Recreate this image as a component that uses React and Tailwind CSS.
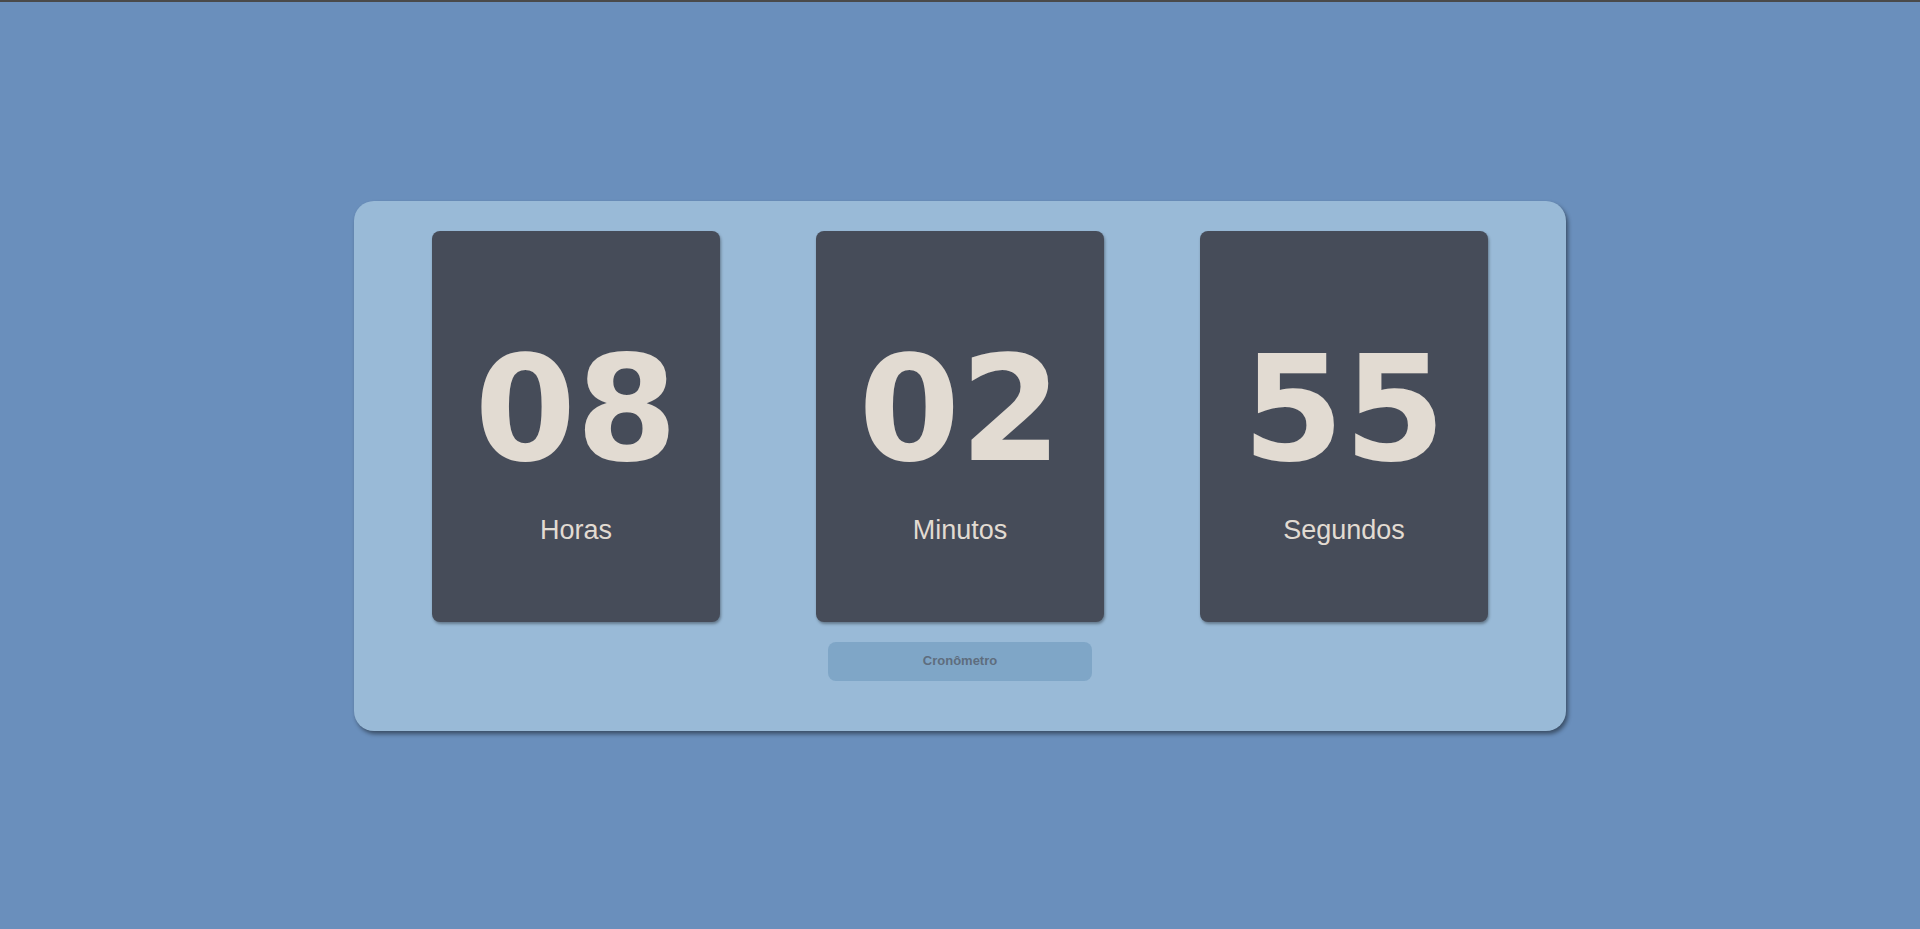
import React from 'react';

const units = [
    { value: '08', label: 'Horas' },
    { value: '02', label: 'Minutos' },
    { value: '55', label: 'Segundos' },
];

const TimeCard = ({ value, label }) => (
    <div className="w-[288px] h-[391px] bg-[#464c59] rounded-[8px] shadow-[1px_2px_3px_rgba(0,0,0,0.35)] flex flex-col items-center pt-[104px]">
        <span className="block text-[146px] leading-[148px] font-bold text-[#e2dbd2] font-['DejaVu_Sans',sans-serif]">
            {value}
        </span>
        <span className="block mt-[31px] text-[27px] leading-[32px] text-[#e2dbd2] font-['Liberation_Sans',sans-serif]">
            {label}
        </span>
    </div>
);

const App = () => {
    return (
        <div className="min-h-screen bg-[#6a8fbc] border-t-2 border-[#4a4a4a] flex items-center justify-center font-['Liberation_Sans',sans-serif]">
            <div className="w-[1212px] h-[530px] bg-[#99bad7] rounded-[20px] shadow-[2px_3px_4px_rgba(0,0,0,0.45)] pt-[30px] flex flex-col items-center">
                <div className="flex gap-[96px]">
                    {units.map(u => <TimeCard key={u.label} value={u.value} label={u.label} />)}
                </div>
                <button className="mt-[20px] w-[264px] h-[39px] rounded-[8px] bg-[#7fa6c7] text-[13px] font-bold text-[#5e6d7e]">
                    Cronômetro
                </button>
            </div>
        </div>
    );
};

export default App;
